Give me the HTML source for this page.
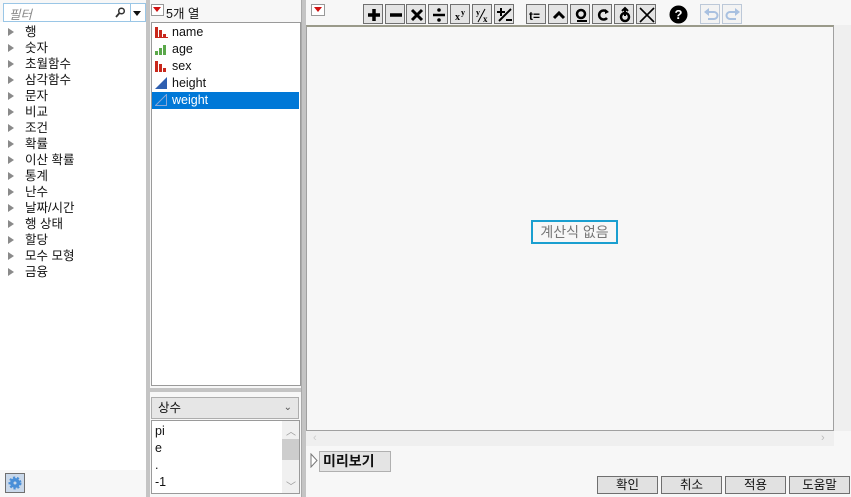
<!DOCTYPE html>
<html><head><meta charset="utf-8"><style>
*{box-sizing:border-box;margin:0;padding:0}
body{width:851px;height:497px;background:#f7f7f7;font-family:"Liberation Sans","Noto Sans CJK KR",sans-serif;font-size:12px;color:#111;position:relative;overflow:hidden}
.a{position:absolute}
.tree div{position:absolute;left:25px;font-size:12.5px;line-height:16px}
.tree span{position:absolute;left:-17px;top:4px;width:0;height:0;border-left:6px solid #8a8a8a;border-top:4px solid transparent;border-bottom:4px solid transparent}
.btn{position:absolute;top:4px;width:20px;height:20px;background:#e4e4e4;border:1px solid #707070}
.btn svg{position:absolute;left:1px;top:1px}
.cols div{position:absolute;left:20px;font-size:12.5px;line-height:17px}
.ok{position:absolute;top:476px;height:18px;width:61px;background:#e1e1e1;border:1px solid #6f6f6f;text-align:center;font-size:12.5px;line-height:16px}
</style></head><body>
<div class="a" style="left:0;top:22px;width:146px;height:448px;background:#fff"></div>
<div class="a" style="left:3px;top:3px;width:128px;height:19px;border:1px solid #9ac6e6;background:#fff"></div>
<div class="a" style="left:9px;top:4px;font-style:italic;color:#888;font-size:12.5px">필터</div>
<svg class="a" style="left:115px;top:7px" width="11" height="11"><circle cx="6.5" cy="4" r="2.8" stroke="#333" stroke-width="1.5" fill="none"/><line x1="4.5" y1="6" x2="1" y2="10" stroke="#333" stroke-width="1.8"/></svg>
<div class="a" style="left:131px;top:3px;width:15px;height:19px;border:1px solid #9ac6e6;border-left:none;background:#fff"></div>
<div class="a" style="left:133px;top:11px;border-top:5px solid #111;border-left:4px solid transparent;border-right:4px solid transparent"></div>
<div class="tree">
<div style="top:24px"><span></span>행</div><div style="top:40px"><span></span>숫자</div><div style="top:56px"><span></span>초월함수</div><div style="top:72px"><span></span>삼각함수</div><div style="top:88px"><span></span>문자</div><div style="top:104px"><span></span>비교</div><div style="top:120px"><span></span>조건</div><div style="top:136px"><span></span>확률</div><div style="top:152px"><span></span>이산 확률</div><div style="top:168px"><span></span>통계</div><div style="top:184px"><span></span>난수</div><div style="top:200px"><span></span>날짜/시간</div><div style="top:216px"><span></span>행 상태</div><div style="top:232px"><span></span>할당</div><div style="top:248px"><span></span>모수 모형</div><div style="top:264px"><span></span>금융</div>
</div>
<div class="a" style="left:5px;top:473px;width:20px;height:20px;border:1px solid #707070;background:#c9d8ea"></div>
<svg class="a" style="left:8px;top:476px" width="14" height="14"><circle cx="7" cy="7" r="5" fill="#4a8fd8" stroke="#4a8fd8" stroke-width="3" stroke-dasharray="2 1.6"/><circle cx="7" cy="7" r="1.5" fill="#c9d8ea"/></svg>
<div class="a" style="left:146px;top:0;width:4px;height:497px;background:#c4c4c4"></div>
<div class="a" style="left:151px;top:4px;width:13px;height:12px;border:1px solid #999;background:#fff"></div>
<div class="a" style="left:153px;top:7px;border-top:5px solid #d01010;border-left:4px solid transparent;border-right:4px solid transparent"></div>
<div class="a" style="left:166px;top:3px;font-size:12.5px">5개 열</div>
<div class="a" style="left:151px;top:22px;width:150px;height:364px;border:1px solid #9a9a9a;background:#fff"></div>
<div class="a" style="left:152px;top:92px;width:147px;height:17px;background:#0078d7"></div>
<div class="cols a" style="left:152px;top:24px;width:147px">
<svg class="a" style="left:3px;top:2px" width="13" height="12"><rect x="0" y="1" width="3" height="11" fill="#c8281c"/><rect x="4" y="4" width="3" height="8" fill="#c8281c"/><rect x="8" y="8" width="3" height="4" fill="#c8281c"/><rect x="0" y="11" width="13" height="1" fill="#c8281c"/></svg>
<div style="top:0">name</div>
<svg class="a" style="left:3px;top:19px" width="13" height="12"><rect x="0" y="8" width="3" height="4" fill="#5aa84a"/><rect x="4" y="5" width="3" height="7" fill="#5aa84a"/><rect x="8" y="2" width="3" height="10" fill="#5aa84a"/></svg>
<div style="top:17px">age</div>
<svg class="a" style="left:3px;top:36px" width="13" height="12"><rect x="0" y="1" width="3" height="11" fill="#c8281c"/><rect x="4" y="4" width="3" height="8" fill="#c8281c"/><rect x="8" y="8" width="3" height="4" fill="#c8281c"/></svg>
<div style="top:34px">sex</div>
<svg class="a" style="left:3px;top:53px" width="13" height="12"><polygon points="0,12 12,0 12,12" fill="#2f5fb0"/></svg>
<div style="top:51px">height</div>
<svg class="a" style="left:3px;top:70px" width="13" height="12"><polygon points="0.5,11.5 11.5,0.5 11.5,11.5" fill="none" stroke="#8aa8d8"/></svg>
<div style="top:68px;color:#fff">weight</div>
</div>
<div class="a" style="left:150px;top:388px;width:152px;height:4px;background:#c4c4c4"></div>
<div class="a" style="left:151px;top:397px;width:148px;height:22px;border:1px solid #adadad;background:#e6e6e6;padding-left:6px;line-height:20px;font-size:12.5px">상수<span style="position:absolute;right:6px;top:0;font-size:10px;color:#555">⌄</span></div>
<div class="a" style="left:151px;top:420px;width:149px;height:74px;border:1px solid #9a9a9a;background:#fff"></div>
<div class="a" style="left:282px;top:421px;width:17px;height:72px;background:#f0f0f0"></div>
<div class="a" style="left:282px;top:439px;width:17px;height:21px;background:#cdcdcd"></div>
<div class="a" style="left:286px;top:423px;font-size:10px;color:#999">︿</div>
<div class="a" style="left:286px;top:478px;font-size:10px;color:#999">﹀</div>
<div class="a" style="left:155px;top:423px;line-height:17px;font-size:12.5px">pi<br>e<br>.<br>-1</div>
<div class="a" style="left:301px;top:0;width:5px;height:497px;background:#c4c4c4;border-left:1px solid #aaa"></div>
<div class="a" style="left:311px;top:4px;width:14px;height:12px;border:1px solid #999;background:#fff"></div>
<div class="a" style="left:314px;top:7px;border-top:5px solid #d01010;border-left:4px solid transparent;border-right:4px solid transparent"></div>
<div class="btn" style="left:363px"><svg width="18" height="18"><path d="M9 3v12M3 9h12" stroke="#000" stroke-width="3.5"/></svg></div>
<div class="btn" style="left:385px"><svg width="18" height="18"><path d="M3 9h12" stroke="#000" stroke-width="3.5"/></svg></div>
<div class="btn" style="left:406px"><svg width="18" height="18"><path d="M4 4l10 10M14 4L4 14" stroke="#000" stroke-width="3"/></svg></div>
<div class="btn" style="left:428px"><svg width="18" height="18"><path d="M3 9h12" stroke="#000" stroke-width="2.5"/><circle cx="9" cy="4" r="1.8"/><circle cx="9" cy="14" r="1.8"/></svg></div>
<div class="btn" style="left:450px"><svg width="18" height="18"><text x="3" y="14" font-family="Liberation Serif" font-weight="bold" font-size="10">x</text><text x="9" y="9" font-family="Liberation Serif" font-weight="bold" font-size="8">y</text></svg></div>
<div class="btn" style="left:472px"><svg width="18" height="18"><text x="2" y="9" font-family="Liberation Serif" font-weight="bold" font-size="8">y</text><path d="M4 16L11 3" stroke="#000"/><text x="9" y="16" font-family="Liberation Serif" font-weight="bold" font-size="9">x</text></svg></div>
<div class="btn" style="left:494px"><svg width="18" height="18"><path d="M5 2v8M1 6h8M3 15L15 3M10 14h6" stroke="#000" stroke-width="2"/></svg></div>
<div class="btn" style="left:526px"><svg width="18" height="18"><text x="1" y="14" font-family="Liberation Sans" font-weight="bold" font-size="12">t=</text></svg></div>
<div class="btn" style="left:548px"><svg width="18" height="18"><path d="M4 12l5-5 5 5" stroke="#000" stroke-width="3" fill="none"/></svg></div>
<div class="btn" style="left:570px"><svg width="18" height="18"><circle cx="9" cy="8" r="4" stroke="#000" stroke-width="2.5" fill="none"/><path d="M5 15h10" stroke="#000" stroke-width="2"/></svg></div>
<div class="btn" style="left:592px"><svg width="18" height="18"><path d="M13 6A4.5 4.5 0 1 0 13 12" stroke="#000" stroke-width="2.5" fill="none"/><path d="M11 3l4 3-4 2z"/></svg></div>
<div class="btn" style="left:614px"><svg width="18" height="18"><circle cx="9" cy="11" r="4" stroke="#000" stroke-width="2.5" fill="none"/><path d="M9 2v8M6 5l3-3 3 3" stroke="#000" stroke-width="2" fill="none"/></svg></div>
<div class="btn" style="left:636px"><svg width="18" height="18"><path d="M2 2l14 14M16 2L2 16" stroke="#000" stroke-width="1.6"/></svg></div>
<svg class="a" style="left:669px;top:5px" width="19" height="19"><circle cx="9.5" cy="9.5" r="9" fill="#000"/><text x="9.5" y="14" text-anchor="middle" fill="#fff" font-family="Liberation Sans" font-weight="bold" font-size="13">?</text></svg>
<div class="btn" style="left:700px;background:#f3f3f3;border-color:#bcc8d8"><svg width="18" height="18"><path d="M6 6h6a3.5 3.5 0 0 1 0 7H6" stroke="#a8c0e0" stroke-width="2" fill="none"/><path d="M2 6l5-4v8z" fill="#a8c0e0"/></svg></div>
<div class="btn" style="left:722px;background:#f3f3f3;border-color:#bcc8d8"><svg width="18" height="18"><path d="M12 6H6a3.5 3.5 0 0 0 0 7h6" stroke="#a8c0e0" stroke-width="2" fill="none"/><path d="M16 6l-5-4v8z" fill="#a8c0e0"/></svg></div>
<div class="a" style="left:306px;top:25px;width:528px;height:406px;border:1px solid #a0a0a0;border-top:2px solid #9a9a8a;background:#f7f7f7"></div>
<div class="a" style="left:834px;top:25px;width:17px;height:406px;background:#efefef"></div>
<div class="a" style="left:306px;top:431px;width:528px;height:15px;background:#efefef"></div>
<div class="a" style="left:313px;top:432px;color:#ccc;font-size:11px">‹</div>
<div class="a" style="left:821px;top:432px;color:#bbb;font-size:11px">›</div>
<div class="a" style="left:531px;top:220px;width:87px;height:24px;border:2px solid #1a9fd0;text-align:center;line-height:20px;font-size:14px;color:#777">계산식 없음</div>
<svg class="a" style="left:310px;top:453px" width="9" height="15"><polygon points="1,1 7,7.5 1,14" fill="#fff" stroke="#777"/></svg>
<div class="a" style="left:319px;top:451px;width:72px;height:21px;border:1px solid #b0b0b0;background:#e4e4e4;font-size:14px;font-weight:bold;line-height:19px;padding-left:3px">미리보기</div>
<div class="ok" style="left:597px">확인</div>
<div class="ok" style="left:661px">취소</div>
<div class="ok" style="left:725px">적용</div>
<div class="ok" style="left:789px">도움말</div>
</body></html>
